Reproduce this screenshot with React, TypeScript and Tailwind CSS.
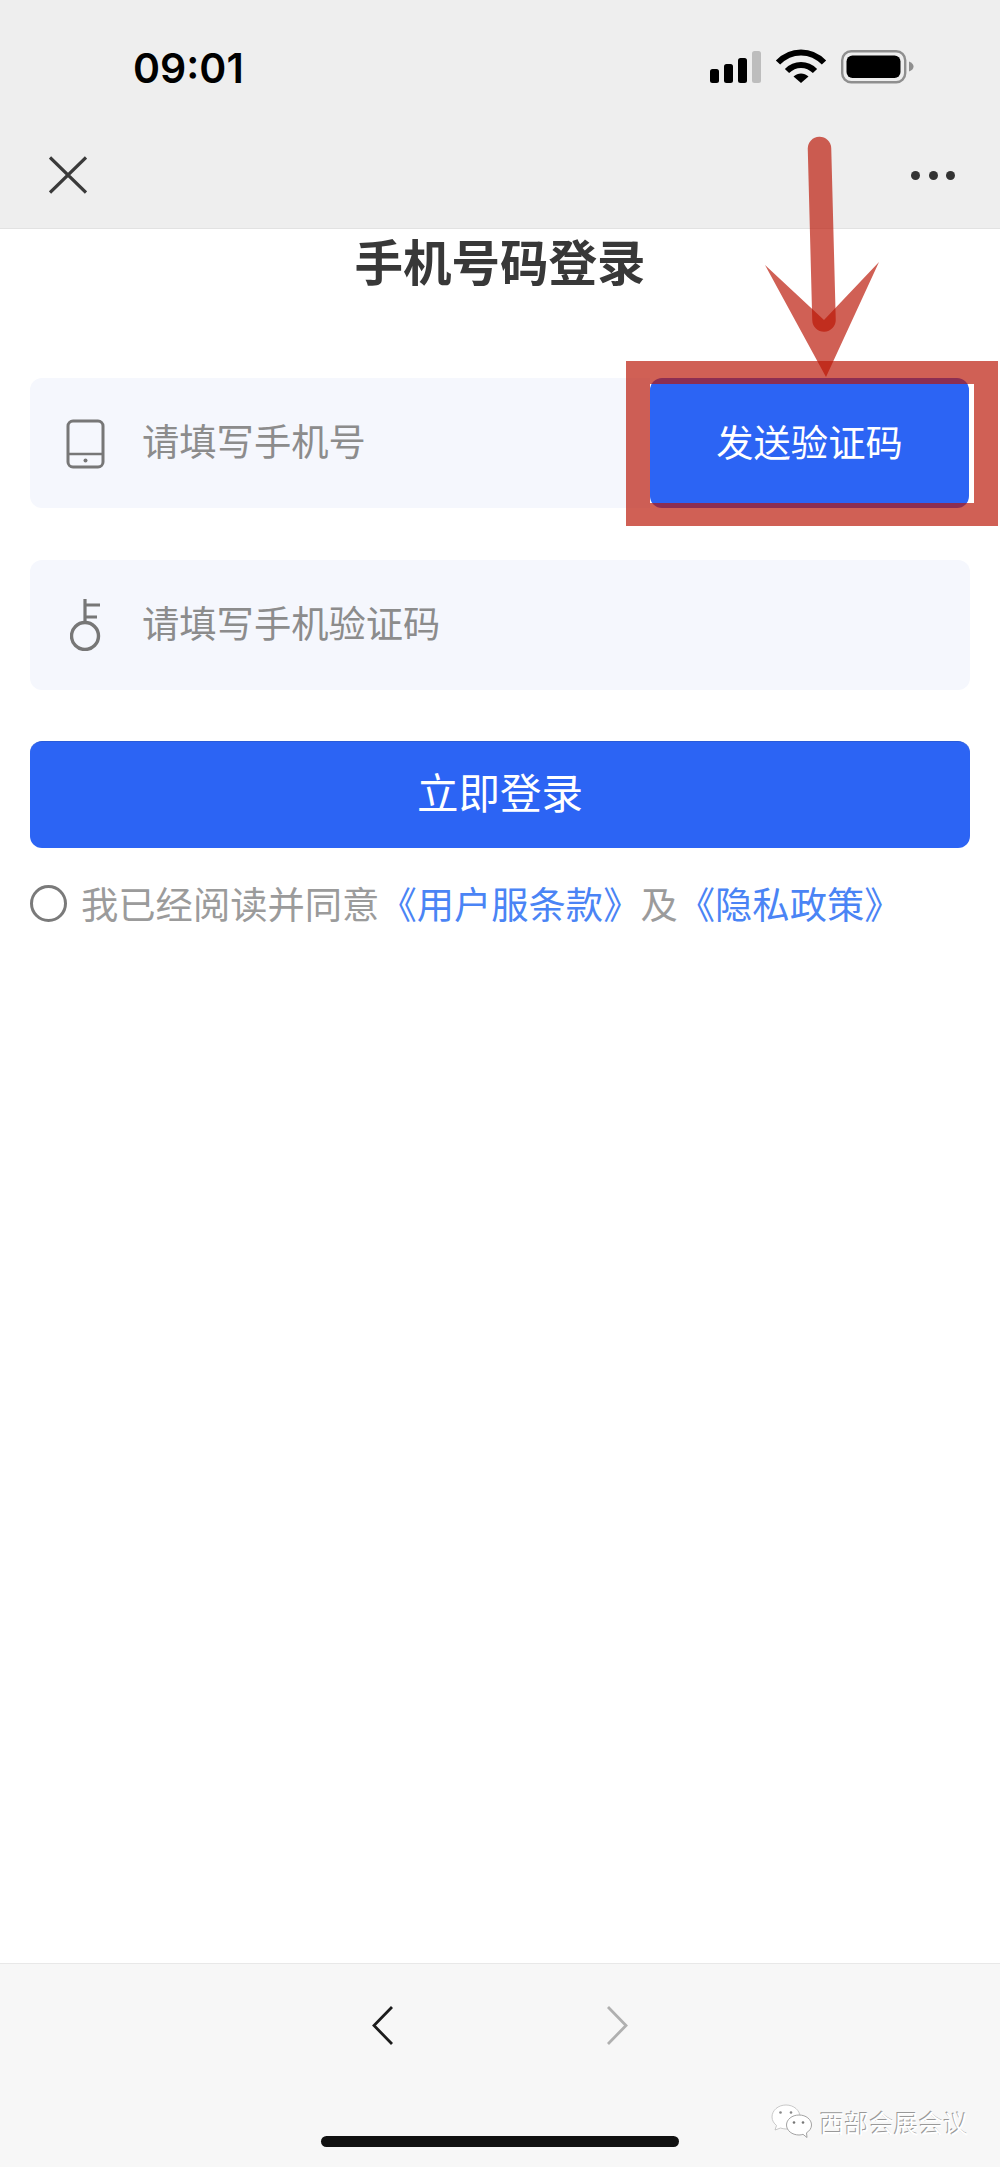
const cjk = "font-['Noto_Sans_CJK_SC','Noto_Sans',sans-serif]";

const StatusIcons = () => (
  <svg width="206" height="36" viewBox="0 0 206 36" className="absolute left-[709px] top-[49px]">
    <rect x="1" y="20" width="9" height="14" rx="2.5" fill="#000" />
    <rect x="15" y="15" width="9" height="19" rx="2.5" fill="#000" />
    <rect x="29" y="9" width="9" height="25" rx="2.5" fill="#000" />
    <rect x="43" y="2" width="9" height="32" rx="2.5" fill="#bdbdbd" />
    <path d="M69 13.5C82 0 102 0 115 13.5" fill="none" stroke="#000" strokeWidth="6" strokeLinejoin="round" />
    <path d="M78 22C86 14 98 14 106 22" fill="none" stroke="#000" strokeWidth="6" />
    <path d="M92 34L84.5 27.5C89 23.5 95 23.5 99.5 27.5Z" fill="#000" />
    <rect x="133.2" y="2.2" width="63" height="31" rx="9" fill="none" stroke="#8f8f8f" strokeWidth="2.4" />
    <rect x="137.5" y="6.5" width="54" height="22.5" rx="6" fill="#000" />
    <path d="M200 12.5C203 13.5 204.5 15.5 204.5 17.5C204.5 19.5 203 21.5 200 22.5Z" fill="#8f8f8f" />
  </svg>
);

const PhoneIcon = () => (
  <svg width="40" height="50" viewBox="0 0 40 50" className="shrink-0 mt-[2px]">
    <rect x="2" y="2" width="35" height="46" rx="5" fill="none" stroke="#777" strokeWidth="3" />
    <path d="M2 35H37" stroke="#777" strokeWidth="2.5" />
    <circle cx="19.5" cy="41.5" r="2" fill="#777" />
  </svg>
);

const KeyIcon = () => (
  <svg width="40" height="52" viewBox="0 0 40 52" className="shrink-0">
    <circle cx="15" cy="37" r="13.5" fill="none" stroke="#777" strokeWidth="3.4" />
    <path d="M15 24V0M15 6H30M15 18H27" fill="none" stroke="#777" strokeWidth="3.2" />
  </svg>
);

const Arrow = () => (
  <svg width="160" height="260" viewBox="0 0 160 260" className="absolute left-[750px] top-[130px]">
    <line x1="69.5" y1="18.5" x2="74" y2="190" stroke="rgb(186,21,5)" strokeOpacity="0.68" strokeWidth="23.5" strokeLinecap="round" />
    <path d="M15 135L74 190L129 132L76 247Z" fill="rgb(186,21,5)" fillOpacity="0.68" />
  </svg>
);

const WechatMark = () => (
  <svg width="41" height="35" viewBox="0 0 41 35" className="shrink-0">
    <path d="M15 1C7 1 1 6.500 1 13C1 16.500 3 19.500 5.500 21.500L4 26L9.500 24C11 24.500 13 25 15 25C23 25 29 19.500 29 13C29 6.500 23 1 15 1Z" fill="#fff" stroke="#bbb" strokeWidth="0.8" />
    <circle cx="9.500" cy="8.500" r="1.300" fill="#888" />
    <circle cx="20" cy="8.500" r="1.300" fill="#888" />
    <path d="M28 11C21 11 15.500 15.500 15.500 21C15.500 26.500 21 31 28 31C29.500 31 31 30.700 32 30.300L36 33.500L35.500 28.800C38.500 27 40.500 24.200 40.500 21C40.500 15.500 35 11 28 11Z" fill="#fff" stroke="#999" strokeWidth="0.9" />
    <circle cx="23" cy="18.500" r="1.300" fill="#777" />
    <circle cx="32" cy="18.500" r="1.300" fill="#777" />
  </svg>
);

export default function App() {
  return (
    <div className={`relative w-[1000px] h-[2167px] flex flex-col bg-white overflow-hidden ${cjk}`}>
      <header className="h-[229px] shrink-0 flex flex-col bg-[#eeeeee] border-b border-[#e2e2e2]">
        <div className="h-[114px] pl-[133px] pt-[42px]">
          <span className="font-['Inter',sans-serif] font-semibold text-[41px] leading-[52px] text-black">09:01</span>
        </div>
        <div className="flex-1 flex items-center justify-between pl-[49px] pr-[45px] pt-[8px]">
          <svg width="38" height="38" viewBox="0 0 38 38">
            <path d="M1 1.500L37 36.500M37 1.500L1 36.500" stroke="#3a3a3a" strokeWidth="3.200" />
          </svg>
          <div className="flex gap-[8.500px]">
            <span className="w-[9px] h-[9px] rounded-full bg-[#333]" />
            <span className="w-[9px] h-[9px] rounded-full bg-[#333]" />
            <span className="w-[9px] h-[9px] rounded-full bg-[#333]" />
          </div>
        </div>
      </header>

      <main className="flex-1 flex flex-col px-[30px]">
        <h1 className="mt-[1px] h-[60px] text-center text-[48.500px] leading-[60px] font-bold text-[#383838]">手机号码登录</h1>

        <div className="mt-[88px] flex h-[130px]">
          <div className="flex-1 flex items-center pl-[36px] gap-[37px] rounded-l-[12px] bg-[#f5f7fd]">
            <PhoneIcon />
            <span className="text-[37.300px] leading-[44px] text-[#8c8c8c] -mt-[6px] -ml-[1px]">请填写手机号</span>
          </div>
          <button className="w-[319px] mr-[1px] rounded-[12px] bg-[#2c64f4] text-white text-[37.300px] leading-[44px] pb-[4px]">发送验证码</button>
        </div>

        <div className="mt-[52px] flex items-center h-[130px] pl-[40px] gap-[32px] rounded-[12px] bg-[#f5f7fd]">
          <KeyIcon />
          <span className="text-[37.300px] leading-[44px] text-[#8c8c8c] -mt-[6px]">请填写手机验证码</span>
        </div>

        <button className="mt-[51px] h-[107px] rounded-[12px] bg-[#2c64f4] border-t border-[#2a5bd8] text-white text-[41.500px] leading-[50px] pb-[8px]">立即登录</button>

        <div className="mt-[33px] flex items-center gap-[14px]">
          <span className="w-[37px] h-[37px] rounded-full border-[3px] border-[#7a7a7a]" />
          <p className="text-[37.300px] leading-[44px] text-[#9b9b9b] whitespace-nowrap">
            我已经阅读并同意<span className="text-[#4a84f5]">《用户服条款》</span>及<span className="text-[#4a84f5]">《隐私政策》</span>
          </p>
        </div>
      </main>

      <footer className="h-[204px] shrink-0 bg-[#f7f7f7] border-t border-[#e8e8e8]">
        <div className="flex justify-center gap-[214px] pt-[42px]">
          <svg width="21" height="39" viewBox="0 0 21 39">
            <path d="M20 1L2 19.500L20 38" fill="none" stroke="#1c1c1c" strokeWidth="2.800" />
          </svg>
          <svg width="21" height="39" viewBox="0 0 21 39">
            <path d="M1 1L19 19.500L1 38" fill="none" stroke="#b0b0b0" strokeWidth="2.800" />
          </svg>
        </div>
        <div className="mx-auto mt-[91px] w-[358px] h-[11px] rounded-full bg-[#111]" />
      </footer>

      <StatusIcons />
      {/* annotation drawn over the screenshot */}
      <div className="absolute left-[626px] top-[361px] w-[372px] h-[165px] border-x-[24px] border-y-[23px] border-[rgba(186,21,5,0.68)]" />
      <Arrow />
      <div className="absolute left-[771px] top-[2104px] flex items-center gap-[8px]">
        <WechatMark />
        <span className="text-[24.700px] leading-[30px] text-white [text-shadow:-1px_-1px_0_#999] whitespace-nowrap">西部会展会议</span>
      </div>
    </div>
  );
}
